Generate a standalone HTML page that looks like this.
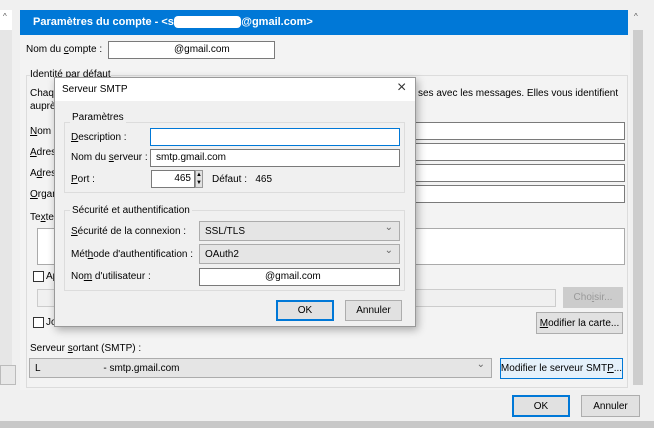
<!DOCTYPE html>
<html><head><meta charset="utf-8"><style>
*{box-sizing:border-box;margin:0;padding:0}
body{width:654px;height:428px;background:#f0f0f0;font-family:"Liberation Sans",sans-serif;font-size:10px;color:#000;position:relative;overflow:hidden}
.a{position:absolute}
.in{position:absolute;background:#fff;border:1px solid #7a7a7a;height:18px;padding:2px 5px;line-height:12px;white-space:nowrap}
.btn{position:absolute;background:#e1e1e1;border:1px solid #adadad;display:flex;align-items:center;justify-content:center;white-space:nowrap}
.sel{position:absolute;background:#e5e5e5;border:1px solid #acacac;padding:0 5px;display:flex;align-items:center;white-space:nowrap}
.sel:after{content:"⌄";position:absolute;right:6px;top:0px;color:#666;font-size:10px}
.grp{position:absolute;border:1px solid #dcdcdc}
.lbl{position:absolute;white-space:nowrap}
.cb{position:absolute;width:11px;height:11px;border:1px solid #333;background:#fff}
u{text-decoration:underline}
</style></head><body>
<div class="a" style="left:0;top:10px;width:12px;height:370px;background:#fff"></div>
<div class="a" style="left:3px;top:12px;font-size:8px;color:#555">^</div>
<div class="a" style="left:0;top:30px;width:12px;height:335px;background:#e6e6e6"></div>
<div class="a" style="left:0;top:365px;width:16px;height:20px;background:#e8e8e8;border:1px solid #bbb"></div>
<div class="a" style="left:631px;top:10px;width:14px;height:390px;background:#f0f0f0"></div>
<div class="a" style="left:633px;top:30px;width:10px;height:355px;background:#cdcdcd"></div>
<div class="a" style="left:634px;top:12px;font-size:8px;color:#555">^</div>
<div class="a" style="left:20px;top:10px;width:608px;height:25px;background:#0078d7;color:#fff;font-weight:bold;font-size:11px;line-height:25px;padding-left:13px">Paramètres du compte - &lt;s<span style="color:#fff;background:#fff;border-radius:4px">xxxxxxxxxxx</span>@gmail.com&gt;</div>
<div class="a" style="left:20px;top:35px;width:610px;height:355px;background:#f3f3f3"></div>
<div class="lbl" style="left:26px;top:44px">Nom du <u>c</u>ompte :</div>
<div class="in" style="left:108px;top:41px;width:167px;padding-left:65px">@gmail.com</div>
<div class="grp" style="left:26px;top:75px;width:602px;height:313px"></div>
<div class="lbl" style="left:30px;top:69px;background:#f3f3f3">Identité par défaut</div>
<div class="lbl" style="left:30px;top:88px">Chaque</div>
<div class="lbl" style="left:30px;top:101px">auprès</div>
<div class="lbl" style="left:418px;top:88px">ses avec les messages. Elles vous identifient</div>
<div class="lbl" style="left:30px;top:126px"><u>N</u>om</div>
<div class="lbl" style="left:30px;top:147px"><u>A</u>dres</div>
<div class="lbl" style="left:30px;top:168px">A<u>d</u>res</div>
<div class="lbl" style="left:30px;top:189px"><u>O</u>rgan</div>
<div class="lbl" style="left:30px;top:212px">Te<u>x</u>te</div>
<div class="in" style="left:395px;top:122px;width:230px"></div>
<div class="in" style="left:395px;top:143px;width:230px"></div>
<div class="in" style="left:395px;top:164px;width:230px"></div>
<div class="in" style="left:395px;top:185px;width:230px"></div>
<div class="in" style="left:37px;top:228px;width:588px;height:37px;border-color:#aaa"></div>
<div class="cb" style="left:33px;top:271px"></div><div class="lbl" style="left:46px;top:271px">Ap</div>
<div class="in" style="left:37px;top:289px;width:519px;background:#f0f0f0;border-color:#ccc"></div>
<div class="btn" style="left:563px;top:287px;width:60px;height:21px;color:#999;background:#ccc;border-color:#ccc">Cho<u>i</u>sir...</div>
<div class="cb" style="left:33px;top:317px"></div><div class="lbl" style="left:46px;top:317px">Joi</div>
<div class="btn" style="left:536px;top:312px;width:87px;height:22px"><u>M</u>odifier la carte...</div>
<div class="lbl" style="left:30px;top:343px">Serveur <u>s</u>ortant (SMTP) :</div>
<div class="sel" style="left:29px;top:358px;width:463px;height:20px">L<span style="color:#e5e5e5">xxxxxxxxxxxx</span>&nbsp;- smtp.gmail.com</div>
<div class="btn" style="left:500px;top:358px;width:123px;height:21px;background:#e5f1fb;border-color:#0078d7">Modifier le serveur SMT<u>P</u>...</div>
<div class="btn" style="left:512px;top:395px;width:58px;height:22px;border:2px solid #0078d7">OK</div>
<div class="btn" style="left:581px;top:395px;width:59px;height:22px">Annuler</div>
<div class="a" style="left:0;top:421px;width:654px;height:7px;background:#c8c8c8"></div>
<div class="a" style="left:54px;top:77px;width:362px;height:250px;background:#f0f0f0;border:1px solid #999;box-shadow:2px 3px 8px rgba(0,0,0,.3)"></div>
<div class="a" style="left:55px;top:78px;width:360px;height:23px;background:#fff"></div>
<div class="lbl" style="left:62px;top:84px">Serveur SMTP</div>
<div class="lbl" style="left:397px;top:79px;font-size:16px;color:#333">×</div>
<div class="grp" style="left:64px;top:122px;width:341px;height:71px"></div>
<div class="lbl" style="left:70px;top:112px;background:#f0f0f0;padding:0 2px">Paramètres</div>
<div class="lbl" style="left:71px;top:132px"><u>D</u>escription :</div>
<div class="in" style="left:150px;top:128px;width:250px;border-color:#0078d7"></div>
<div class="lbl" style="left:71px;top:152px">Nom du <u>s</u>erveur :</div>
<div class="in" style="left:150px;top:149px;width:250px">smtp.gmail.com</div>
<div class="lbl" style="left:71px;top:174px"><u>P</u>ort :</div>
<div class="in" style="left:151px;top:170px;width:44px;text-align:right;padding-right:3px">465</div>
<div class="a" style="left:195px;top:170px;width:8px;height:18px;background:#e1e1e1;border:1px solid #999;font-size:6px;line-height:8px;text-align:center">▲<br>▼</div>
<div class="lbl" style="left:212px;top:174px">Défaut :&nbsp;&nbsp; 465</div>
<div class="grp" style="left:64px;top:210px;width:341px;height:81px"></div>
<div class="lbl" style="left:70px;top:205px;background:#f0f0f0;padding:0 2px">Sécurité et authentification</div>
<div class="lbl" style="left:71px;top:226px"><u>S</u>écurité de la connexion :</div>
<div class="sel" style="left:199px;top:221px;width:201px;height:20px">SSL/TLS</div>
<div class="lbl" style="left:71px;top:249px">Mét<u>h</u>ode d'authentification :</div>
<div class="sel" style="left:199px;top:244px;width:201px;height:20px">OAuth2</div>
<div class="lbl" style="left:71px;top:271px">No<u>m</u> d'utilisateur :</div>
<div class="in" style="left:199px;top:268px;width:201px;padding-left:65px">@gmail.com</div>
<div class="btn" style="left:276px;top:300px;width:58px;height:21px;border:2px solid #0078d7">OK</div>
<div class="btn" style="left:345px;top:300px;width:57px;height:21px">Annuler</div>
</body></html>
